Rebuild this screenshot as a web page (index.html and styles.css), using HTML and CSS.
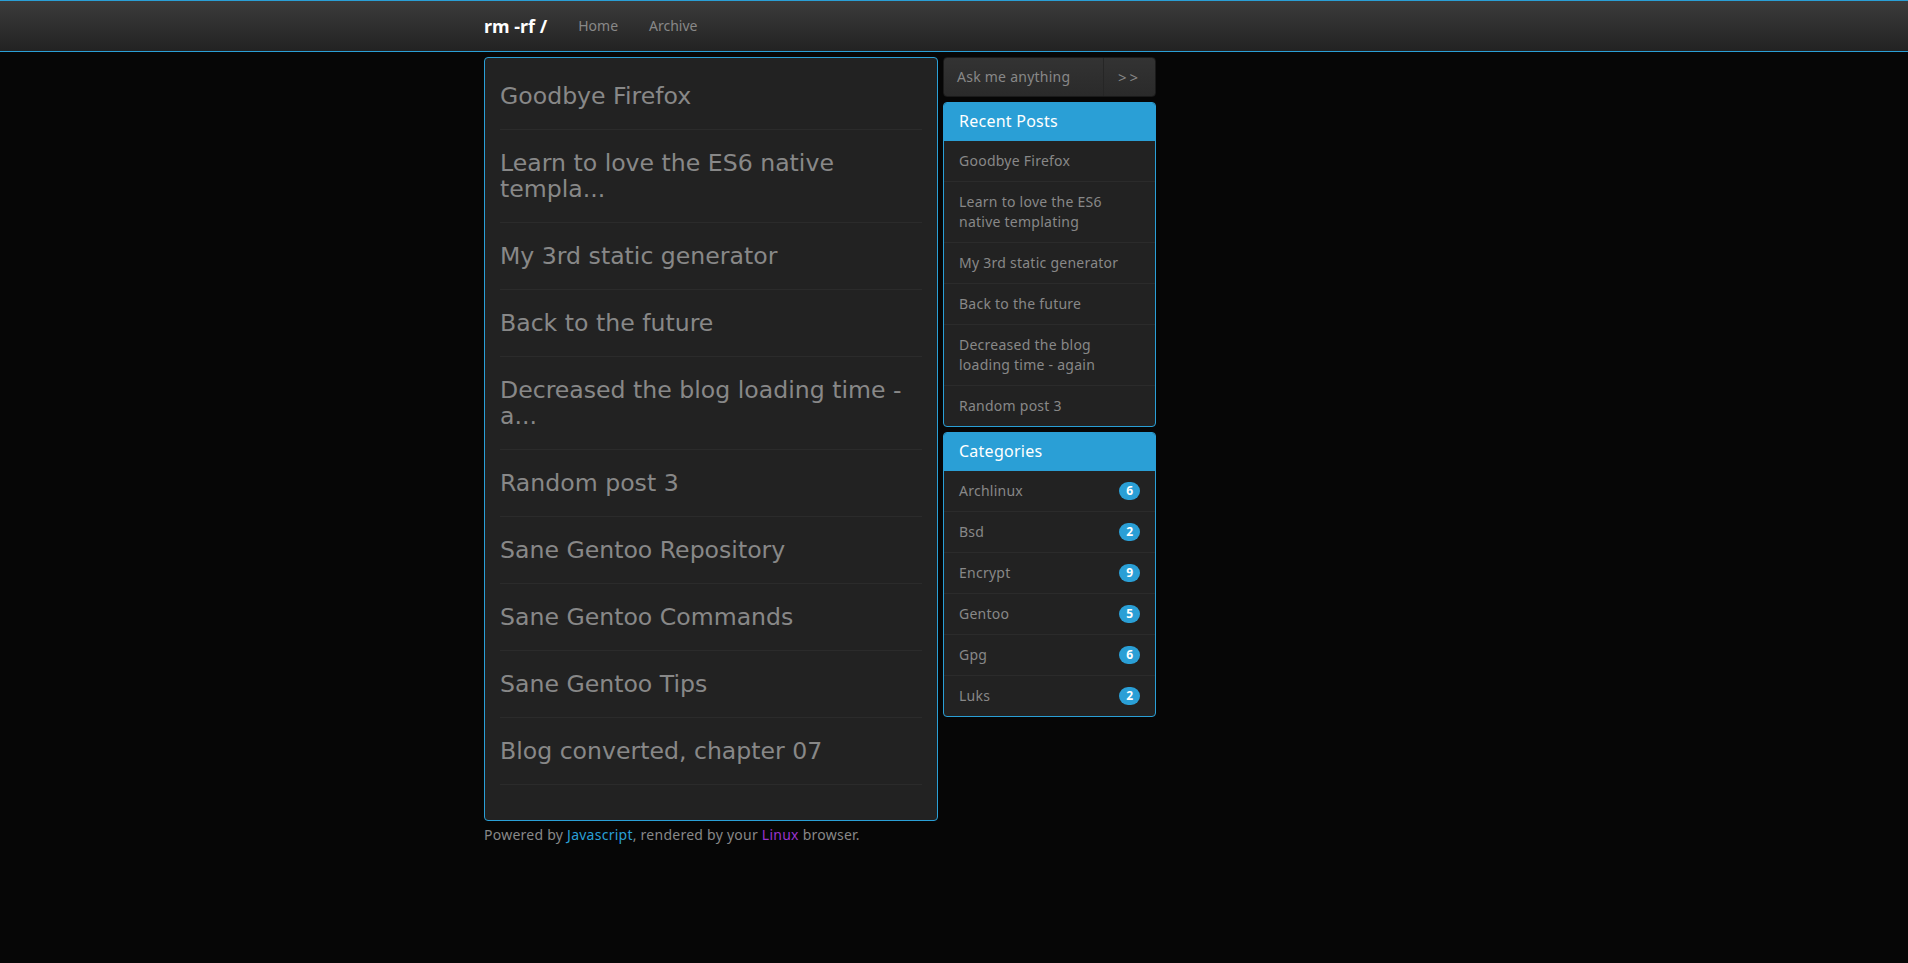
FILE: index.html
```html
<!DOCTYPE html>
<html lang="en">
<head>
<meta charset="utf-8">
<title>rm -rf /</title>
<link rel="stylesheet" href="styles.css">
</head>
<body>
<header class="navbar">
  <div class="container nav-inner">
    <a class="brand" href="#">rm -rf /</a>
    <a class="nav-link" href="#">Home</a>
    <a class="nav-link" href="#">Archive</a>
  </div>
</header>
<div class="container layout">
  <main class="main-col">
    <div class="posts">
      <article class="post"><h3>Goodbye Firefox</h3></article>
      <article class="post"><h3>Learn to love the ES6 native templa...</h3></article>
      <article class="post"><h3>My 3rd static generator</h3></article>
      <article class="post"><h3>Back to the future</h3></article>
      <article class="post"><h3>Decreased the blog loading time - a...</h3></article>
      <article class="post"><h3>Random post 3</h3></article>
      <article class="post"><h3>Sane Gentoo Repository</h3></article>
      <article class="post"><h3>Sane Gentoo Commands</h3></article>
      <article class="post"><h3>Sane Gentoo Tips</h3></article>
      <article class="post"><h3>Blog converted, chapter 07</h3></article>
    </div>
    <footer class="footer">Powered by <a class="js" href="#">Javascript</a>, rendered by your <a class="linux" href="#">Linux</a> browser.</footer>
  </main>
  <aside class="sidebar">
    <div class="ask">
      <div class="ask-input">Ask me anything</div>
      <div class="ask-btn">&gt;&gt;</div>
    </div>
    <section class="panel">
      <div class="panel-heading">Recent Posts</div>
      <div class="list-item">Goodbye Firefox</div>
      <div class="list-item">Learn to love the ES6 native templating</div>
      <div class="list-item">My 3rd static generator</div>
      <div class="list-item">Back to the future</div>
      <div class="list-item">Decreased the blog loading time - again</div>
      <div class="list-item">Random post 3</div>
    </section>
    <section class="panel">
      <div class="panel-heading">Categories</div>
      <div class="list-item"><span>Archlinux</span><span class="badge">6</span></div>
      <div class="list-item"><span>Bsd</span><span class="badge">2</span></div>
      <div class="list-item"><span>Encrypt</span><span class="badge">9</span></div>
      <div class="list-item"><span>Gentoo</span><span class="badge">5</span></div>
      <div class="list-item"><span>Gpg</span><span class="badge">6</span></div>
      <div class="list-item"><span>Luks</span><span class="badge">2</span></div>
    </section>
  </aside>
</div>
</body>
</html>
```
FILE: styles.css
```css
* { box-sizing: border-box; }
body {
  margin: 0;
  background: #060606;
  font-family: "Noto Sans", "Open Sans", "DejaVu Sans", sans-serif;
  font-size: 14px;
  line-height: 20px;
  letter-spacing: 0.25px;
  color: #888;
}
a { text-decoration: none; }
.container { width: 940px; margin: 0 auto; }

.navbar {
  height: 52px;
  background: linear-gradient(#3b3b3b, #222);
  border-top: 1px solid #2a9fd6;
  border-bottom: 1px solid #2a9fd6;
}
.nav-inner { display: flex; align-items: center; height: 50px; }
.brand { color: #fff; font-weight: 700; font-size: 18px; letter-spacing: 0; margin-right: 31px; }
.nav-link { color: #888; letter-spacing: 0; margin-right: 31px; }

.layout { display: flex; align-items: flex-start; gap: 5px; margin-top: 5px; }
.main-col { width: 454px; }
.posts {
  background: #222;
  border: 1px solid #2a9fd6;
  border-radius: 4px;
  padding: 5px 15px 35px;
}
.post { padding: 20px 0; border-bottom: 1px solid #2b2b2b; }
.post h3 {
  margin: 0;
  font-family: "DejaVu Sans", sans-serif;
  font-weight: normal;
  font-size: 23.6px;
  line-height: 26px;
  letter-spacing: 0;
  color: #888;
}
.footer { margin-top: 4px; }
.footer .js { color: #2a9fd6; }
.footer .linux { color: #93c; }

.sidebar { width: 213px; display: flex; flex-direction: column; gap: 5px; }
.ask {
  display: flex;
  height: 40px;
  border: 1px solid #1a1a1a;
  border-radius: 4px;
  background: linear-gradient(#333, #2a2a2a);
}
.ask-input { flex: 1; display: flex; align-items: center; padding-left: 13px; color: #888; }
.ask-btn {
  width: 52px;
  border-left: 1px solid #262626;
  display: flex;
  align-items: center;
  padding-left: 14px;
  font-size: 15px;
  letter-spacing: 3px;
  color: #888;
}
.panel {
  background: #222;
  border: 1px solid #2a9fd6;
  border-radius: 4px;
  overflow: hidden;
}
.panel-heading {
  background: #2a9fd6;
  color: #fff;
  font-size: 16px;
  line-height: 18px;
  padding: 9px 15px 11px;
}
.list-item {
  display: flex;
  justify-content: space-between;
  align-items: center;
  padding: 10px 15px;
  border-top: 1px solid #2b2b2b;
}
.panel-heading + .list-item { border-top: none; }
.badge {
  background: #2a9fd6;
  color: #fff;
  font-size: 12px;
  font-weight: 700;
  line-height: 12px;
  letter-spacing: 0;
  padding: 3px 7px;
  border-radius: 10px;
}
```
